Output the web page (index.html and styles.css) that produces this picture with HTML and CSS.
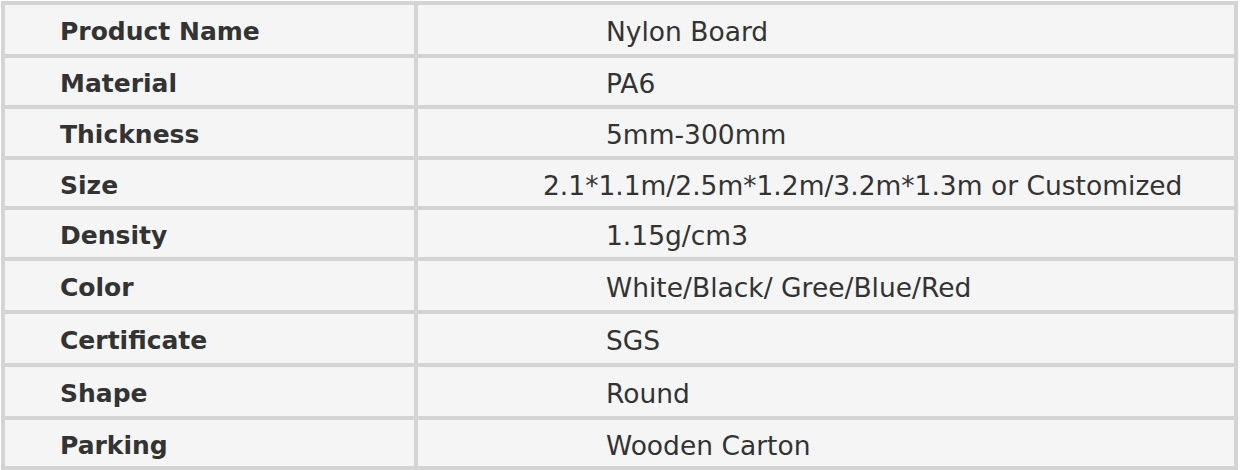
FILE: index.html
```html
<!DOCTYPE html>
<html>
<head>
<meta charset="utf-8">
<link rel="stylesheet" href="styles.css">
</head>
<body>
<div class="spec">
  <div class="label r1">Product Name</div><div class="value r1">Nylon Board</div>
  <div class="label">Material</div><div class="value">PA6</div>
  <div class="label">Thickness</div><div class="value">5mm-300mm</div>
  <div class="label">Size</div><div class="value wide">2.1*1.1m/2.5m*1.2m/3.2m*1.3m or Customized</div>
  <div class="label">Density</div><div class="value">1.15g/cm3</div>
  <div class="label">Color</div><div class="value">White/Black/ Gree/Blue/Red</div>
  <div class="label">Certificate</div><div class="value">SGS</div>
  <div class="label">Shape</div><div class="value">Round</div>
  <div class="label">Parking</div><div class="value">Wooden Carton</div>
</div>
</body>
</html>
```
FILE: styles.css
```css
html, body {
  margin: 0;
  padding: 0;
  background: #ffffff;
}
.spec {
  margin: 1px 0 0 1px;
  width: 1237px;
  box-sizing: border-box;
  display: grid;
  grid-template-columns: 409px 816px;
  grid-template-rows: 49px 47px 47px 46px 47px 49px 49px 49px 46px;
  gap: 4px;
  padding: 4px;
  background: #d4d4d4;
  font-family: "DejaVu Sans", sans-serif;
  font-size: 26.5px;
  color: #333333;
}
.label, .value {
  background: #f5f5f5;
  display: flex;
  align-items: center;
  white-space: nowrap;
  box-sizing: border-box;
  padding-top: 4px;
}
.label {
  padding-left: 55px;
  font-weight: bold;
  font-size: 25px;
}
.value {
  padding-left: 188px;
}
.value.wide {
  padding-left: 125px;
}
```
